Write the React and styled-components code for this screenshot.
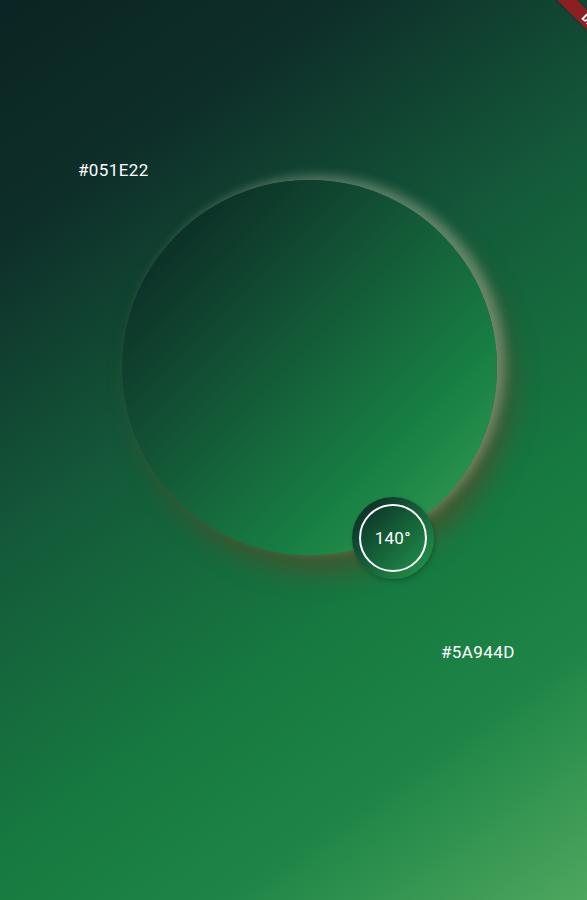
import React from 'react'
import styled, { createGlobalStyle } from 'styled-components'

const GlobalStyle = createGlobalStyle`
  html, body {
    margin: 0;
    padding: 0;
    height: 100%;
  }
  body {
    font-family: Roboto, "Noto Sans", sans-serif;
  }
`

const Screen = styled.div`
  position: relative;
  height: 100vh;
  overflow: hidden;
  display: flex;
  flex-direction: column;
  align-items: flex-start;
  background: linear-gradient(
    145deg,
    #0a2523 0%,
    #0e2e29 18%,
    #145a3a 42%,
    #177a40 66%,
    #1d8446 80%,
    #4ea75e 100%
  );
`

const ColorLabel = styled.span`
  display: block;
  margin-top: ${p => p.top}px;
  margin-left: ${p => p.left}px;
  color: #ffffff;
  font-size: 17px;
  line-height: 20px;
  letter-spacing: 0.4px;
`

const Dial = styled.div`
  position: relative;
  margin-left: 122px;
  width: 375px;
  height: 375px;
  border-radius: 50%;
  background: linear-gradient(135deg, #0b2824 8%, #145a38 45%, #178043 72%, #3aa258 100%);
  box-shadow:
    8px -4px 12px rgba(235, 240, 220, 0.32),
    14px 16px 26px rgba(90, 70, 42, 0.65);
`

const Knob = styled.div`
  position: absolute;
  width: 82px;
  height: 82px;
  border-radius: 50%;
  display: flex;
  align-items: center;
  justify-content: center;
  background: linear-gradient(135deg, #0b2824 5%, #156138 50%, #239a4e 100%);
  box-shadow: 1px 2px 4px rgba(10, 40, 30, 0.35);
`

const KnobRing = styled.div`
  width: 64px;
  height: 64px;
  border-radius: 50%;
  border: 2px solid #ffffff;
  display: flex;
  align-items: center;
  justify-content: center;
  color: #ffffff;
  font-size: 17px;
  letter-spacing: 0.3px;
`

const DebugBanner = styled.div`
  position: absolute;
  left: 540px;
  top: 21px;
  width: 110px;
  height: 14px;
  transform: rotate(45deg);
  background: #8c1f1f;
  color: #ffffff;
  font-family: Roboto, sans-serif;
  font-weight: 900;
  font-size: 10.5px;
  line-height: 14px;
  text-align: center;
  box-shadow: 0 0 3px rgba(0, 0, 0, 0.3);
`

const angle = 140
const radius = 190

export default function App() {
  // knob sits on the dial rim; place it from the angle
  const rad = ((angle - 76) * Math.PI) / 180
  const cx = 187.5 + Math.cos(rad) * radius
  const cy = 187.5 + Math.sin(rad) * radius

  return (
    <Screen>
      <GlobalStyle />
      <ColorLabel top={160} left={78}>#051E22</ColorLabel>
      <Dial>
        <Knob style={{ left: cx - 41, top: cy - 41 }}>
          <KnobRing>{angle}°</KnobRing>
        </Knob>
      </Dial>
      <ColorLabel top={87} left={441}>#5A944D</ColorLabel>
      <DebugBanner>DEBUG</DebugBanner>
    </Screen>
  )
}
